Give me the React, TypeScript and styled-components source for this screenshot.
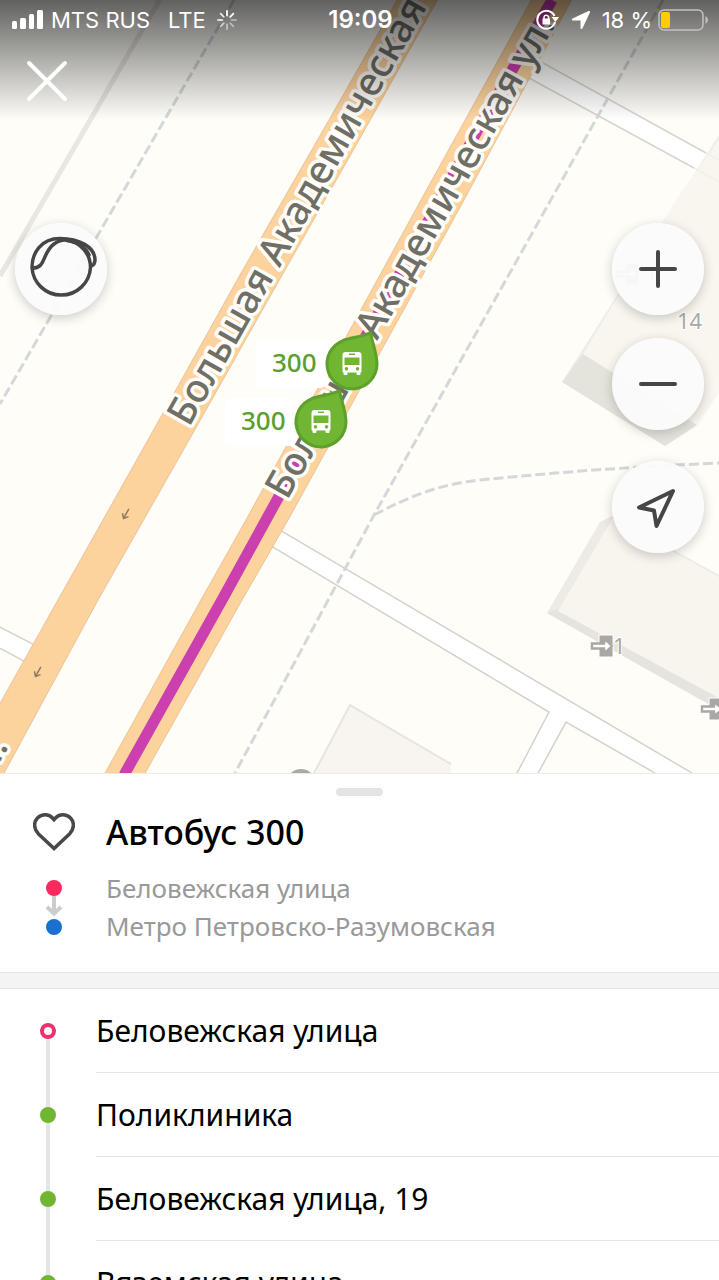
import React from 'react';
import styled, { createGlobalStyle } from 'styled-components';

const GlobalStyle = createGlobalStyle`
  *, *::before, *::after { box-sizing: border-box; }
  body {
    margin: 0;
    background: #fff;
    color: #000;
    font-family: 'Noto Sans', 'Open Sans', sans-serif;
  }
  button { font: inherit; color: inherit; }
`;

const Screen = styled.main`
  display: grid;
  grid-template-rows: 61fr 40fr;
  height: 100vh;
  overflow: hidden;
`;

/* ---------- Map ---------- */

const MapArea = styled.section`
  position: relative;
  min-height: 0;
  overflow: hidden;
  background: #fefdf8;
`;

const MapCanvas = styled.svg`
  display: block;
  width: 100%;
  height: 100%;
`;

const StreetLabel = styled.text`
  font-family: 'Noto Sans', sans-serif;
  font-size: 39px;
  font-weight: 500;
  fill: #6f6f66;
  stroke: #fffdf9;
  stroke-width: 7px;
  stroke-linejoin: round;
  paint-order: stroke;
`;

const HouseNumber = styled.text`
  font-family: 'Noto Sans', sans-serif;
  font-size: 22px;
  fill: #aaa9a5;
  stroke: #fff;
  stroke-width: 2px;
  paint-order: stroke;
`;

const PinLabel = styled.text`
  font-family: 'Noto Sans', sans-serif;
  font-size: 26px;
  font-weight: 500;
  fill: #5b9f2e;
`;

const TopShade = styled.div`
  position: absolute;
  inset: 0 0 auto;
  height: 120px;
  background: linear-gradient(rgba(0, 0, 0, 0.62), rgba(0, 0, 0, 0.31) 50%, rgba(0, 0, 0, 0));
`;

const TopBar = styled.header`
  position: absolute;
  inset: 0 0 auto;
  color: #fff;
`;

const StatusBar = styled.div`
  display: grid;
  grid-template-columns: 1fr auto 1fr;
  align-items: center;
  height: 40px;
  padding: 0 10px 0 12px;
  font-family: Inter, Roboto, sans-serif;
  font-size: 22px;
  line-height: 40px;
  white-space: nowrap;
`;

const StatusGroup = styled.div<{ $end?: boolean }>`
  display: flex;
  align-items: center;
  justify-content: ${(p) => (p.$end ? 'flex-end' : 'flex-start')};
  gap: ${(p) => (p.$end ? '12px' : '18px')};
`;

const Network = styled.span`
  display: flex;
  align-items: center;
  gap: 11px;
`;

const Carrier = styled.span`
  display: flex;
  align-items: center;
  gap: 8px;
`;

const Clock = styled.time`
  font-size: 24px;
  font-weight: 600;
`;

const Battery = styled.span`
  display: flex;
  align-items: center;
  gap: 6px;
`;

const CloseButton = styled.button`
  display: block;
  margin: 17px 0 0 23px;
  padding: 0;
  width: 48px;
  height: 48px;
  border: 0;
  background: none;
  cursor: pointer;
`;

const Controls = styled.div`
  position: absolute;
  inset: 0;
  display: flex;
  justify-content: space-between;
  align-items: center;
  padding: 3px 15px 0;
  pointer-events: none;
`;

const ControlColumn = styled.div`
  display: flex;
  flex-direction: column;
  align-self: center;
  min-height: 330px;
`;

const ZoomGroup = styled.div`
  display: flex;
  flex-direction: column;
  gap: 23px;
  margin-bottom: 31px;
`;

const RoundButton = styled.button`
  display: grid;
  place-items: center;
  width: 92px;
  height: 92px;
  padding: 0;
  border: 0;
  border-radius: 50%;
  background: rgba(252, 251, 252, 0.95);
  box-shadow: 0 3px 12px rgba(0, 0, 0, 0.2);
  pointer-events: auto;
  cursor: pointer;
`;

/* ---------- Bottom sheet ---------- */

const Sheet = styled.section`
  display: flex;
  flex-direction: column;
  min-height: 0;
  overflow-y: auto;
  scrollbar-width: none;
  border-top: 1px solid #ecebe8;
  background: #fff;
`;

const Handle = styled.div`
  flex: none;
  align-self: center;
  width: 47px;
  height: 8px;
  margin-top: 14px;
  border-radius: 4px;
  background: #e4e4e4;
`;

const RouteHeader = styled.div`
  flex: none;
  display: grid;
  grid-template-columns: 106px 1fr;
  padding: 12px 0 26px;
`;

const FavouriteButton = styled.button`
  display: grid;
  place-items: center;
  height: 48px;
  padding: 0 0 0 2px;
  border: 0;
  background: none;
  cursor: pointer;
`;

const Title = styled.h1`
  margin: 0;
  font-size: 34px;
  font-weight: 500;
  line-height: 48px;
`;

const Direction = styled.svg`
  justify-self: center;
  margin: 14px 0 0 2px;
`;

const Ends = styled.div`
  margin-top: 13px;
  color: #999;
  font-size: 26px;
  line-height: 38px;
`;

const End = styled.p`
  margin: 0;
`;

const Divider = styled.div`
  flex: none;
  height: 17px;
  border: solid #e5e5e5;
  border-width: 1px 0;
  background: #f4f4f4;
`;

const Stops = styled.ol`
  flex: none;
  margin: 0;
  padding: 0;
  list-style: none;
`;

const Stop = styled.li`
  display: grid;
  grid-template-columns: 96px 1fr;
  height: 84px;
`;

const StopName = styled.span`
  border-bottom: 1px solid #e5e5e5;
  font-size: 30px;
  line-height: 83px;
  white-space: nowrap;
`;

const Track = styled.span`
  display: flex;
  flex-direction: column;
  align-items: center;
`;

const Rail = styled.span<{ $hidden?: boolean }>`
  flex: 1;
  width: 4px;
  background: ${(p) => (p.$hidden ? 'transparent' : '#e5e5e5')};
`;

const Dot = styled.span<{ $start?: boolean }>`
  width: 16px;
  height: 16px;
  border: ${(p) => (p.$start ? '4px solid #f0306a' : '8px solid #70b632')};
  border-radius: 50%;
  background: #fff;
`;

const stops = ['Беловежская улица', 'Поликлиника', 'Беловежская улица, 19', 'Вяземская улица'];

const Entrance = ({ x, y }: { x: number; y: number }) => (
  <g transform={`translate(${x} ${y})`}>
    <path d="M8 0h14v22H8z" fill="#aaa7a4" stroke="#fff" strokeWidth="1" />
    <path d="M1 8.500h12v-4l7.500 6.500-7.500 6.500v-4H1z" fill="#fff" stroke="#aaa7a4" strokeWidth="2.500" />
    <path d="M2.500 10h12V6.500l5 4.500-5 4.500V12h-12z" fill="#fff" />
  </g>
);

const OneWay = ({ x, y }: { x: number; y: number }) => (
  <g transform={`translate(${x} ${y}) rotate(29)`} fill="none" stroke="#8d7a62" strokeWidth="1.500">
    <path d="M0 -6V5M-3.500 1L0 5L3.500 1" />
  </g>
);

const BusPin = ({ x, y }: { x: number; y: number }) => (
  <g transform={`translate(${x} ${y})`}>
    <rect x="-96" y="-24" width="72" height="48" rx="8" fill="#fff" />
    <PinLabel x="-80" y="8">300</PinLabel>
    <path
      d="M18.500 -31.500C19.500 -24 25 -11 25 0A25 25 0 1 1 -9 -23.500C0 -26.500 10 -27.500 18.500 -31.500Z"
      fill="#70b632"
      stroke="#5da02a"
      strokeWidth="3"
      strokeLinejoin="round"
    />
    <path
      fillRule="evenodd"
      fill="#fff"
      d="M-6.500 -12H6.500Q9.500 -12 9.500 -9V7.500Q9.500 8.500 8.500 8.500V10Q8.500 11 7.500 11H5.500Q4.500 11 4.500 10V8.500H-4.500V10Q-4.500 11 -5.500 11H-7.500Q-8.500 11 -8.500 10V8.500Q-9.500 8.500 -9.500 7.500V-9Q-9.500 -12 -6.500 -12ZM-3 -10.500V-9H3V-10.500ZM-7.500 -6.500V1H7.500V-6.500ZM-5.500 3A1.800 1.800 0 1 0 -5.500 6.600A1.800 1.800 0 1 0 -5.500 3ZM5.500 3A1.800 1.800 0 1 0 5.500 6.600A1.800 1.800 0 1 0 5.500 3Z"
    />
  </g>
);

const CityMap = () => (
  <MapCanvas viewBox="0 0 719 773" preserveAspectRatio="xMidYMid slice" role="img" aria-label="Карта">
    {/* Buildings */}
    <path d="M562 382L719 135V390L697 425L665 446Z" fill="#eeede5" />
    <path d="M562 382L583 354L697 425L665 446Z" fill="#e5e4dc" />
    <path d="M583 354L676 200L719 139V393L697 425Z" fill="#f8f6ee" />
    <path d="M547 613L600 522L612 516L719 575V710Z" fill="#eeebe5" />
    <path d="M547 613L558 609L719 698V710Z" fill="#e6e4de" />
    <path d="M558 611L613 518L719 577V698Z" fill="#f8f5ee" />
    <path d="M350 704L314 773H451V764Z" fill="#f8f5f0" />
    <path d="M314 773L350 705L451 764" fill="none" stroke="#e8e5df" strokeWidth="2" />
    <circle cx="301" cy="784" r="15" fill="#aaa9a9" />

    {/* Footpaths and fence */}
    <path d="M162 -4L0 276" stroke="#e9e7df" strokeWidth="5" />
    <g fill="none" stroke="#d5d7d9" strokeWidth="3" strokeDasharray="10 4">
      <path d="M234 0L0 404" />
      <path d="M374 515C410 496 440 484 480 480S600 468 719 463" />
    </g>

    {/* Side streets */}
    <path d="M539 61L706 153L694 168L529 78Z" fill="#fff" />
    <path d="M534 58L706 153M529 78L694 168" stroke="#d9d4ce" strokeWidth="1.500" />
    <path d="M706 153L719 160M694 168L719 182" stroke="#efece5" strokeWidth="1" />
    <path d="M280 530L692 773H655L566 722L538 773H517L549 712L268 545Z" fill="#fff" />
    <g fill="none" stroke="#d6d1cc" strokeWidth="1.500">
      <path d="M280 530L692 773" />
      <path d="M268 544L549 712L516 775" />
      <path d="M537 775L566 722L655 773" />
    </g>
    <path d="M0 627L33 644L24 661L0 648Z" fill="#fff" />
    <path d="M0 627L33 644M0 648L24 661" stroke="#d6d1cc" strokeWidth="1.500" />
    <path d="M663 0L374 515L235 773" fill="none" stroke="#d5d7d9" strokeWidth="3" strokeDasharray="10 4" />

    {/* Avenue carriageways */}
    <g fill="#fdd39d" stroke="#ecc59c" strokeWidth="1">
      <path d="M399 -3L329 120L240 275L148 440L58 600L-2 707V776L3 775L98 600L189 440L281 277L359 140L439 -3Z" />
      <path d="M533 -3L421 200L246 520L201 600L104 775H144L242 600L288 520L464 200L573 -3Z" />
    </g>
    <path d="M124 775L222 600L278 498L482 122L522 53L552 0" fill="none" stroke="#cb3fae" strokeWidth="11" />
    <OneWay x={126} y={514} />
    <OneWay x={38} y={672} />

    <StreetLabel transform="translate(189 428) rotate(-60.500)">Большая Академическая</StreetLabel>
    <StreetLabel transform="translate(287 501) rotate(-60.600)">Большая Академическая ул.</StreetLabel>
    <StreetLabel transform="translate(9 746) rotate(-60.500)" textAnchor="end">ул.</StreetLabel>

    <Entrance x={617} y={263} />
    <HouseNumber x="645" y="282">1</HouseNumber>
    <HouseNumber x="677" y="329">14</HouseNumber>
    <Entrance x={591} y={635} />
    <HouseNumber x="613" y="654">1</HouseNumber>
    <Entrance x={701} y={698} />

    <BusPin x={352} y={364} />
    <BusPin x={321} y={422} />
  </MapCanvas>
);

const line = { fill: 'none', stroke: '#464646', strokeWidth: 4, strokeLinecap: 'round', strokeLinejoin: 'round' } as const;

const spokes = [1, 1, 0.4, 0.45, 0.5, 0.6, 0.75, 0.85];

const App = () => (
  <>
    <GlobalStyle />
    <Screen>
      <MapArea>
        <CityMap />
        <TopShade />
        <Controls>
          <ControlColumn>
            <RoundButton type="button" aria-label="Обзор">
              <svg width="92" height="92" viewBox="0 0 92 92" {...line} strokeWidth="3.500">
                <path d="M52 17.500C66 19 75.500 31 75.500 44.500A29.300 29.300 0 0 1 17 44.500C17 30 26 15.500 45 15.500C64 15.500 80 24 80 37C80 40 78.500 42 76.500 43" />
                <path d="M18 45C31 45 27 30 39 21C43 18 49 16.500 54 17.500C63 19 71 25 74 32" />
              </svg>
            </RoundButton>
          </ControlColumn>
          <ControlColumn>
            <ZoomGroup>
              <RoundButton type="button" aria-label="Приблизить">
                <svg width="40" height="40" viewBox="0 0 40 40" {...line}>
                  <path d="M20 3V37M3 20H37" />
                </svg>
              </RoundButton>
              <RoundButton type="button" aria-label="Отдалить">
                <svg width="40" height="40" viewBox="0 0 40 40" {...line}>
                  <path d="M3 20H37" />
                </svg>
              </RoundButton>
            </ZoomGroup>
            <RoundButton type="button" aria-label="Моё местоположение">
              <svg width="44" height="44" viewBox="0 0 44 44" {...line}>
                <path d="M37 6L3 22.500L18 25.500L20.500 41Z" />
              </svg>
            </RoundButton>
          </ControlColumn>
        </Controls>
        <TopBar>
          <StatusBar>
            <StatusGroup>
              <Carrier>
                <svg width="31" height="20" viewBox="0 0 31 20" fill="#fff" aria-hidden="true">
                  <rect x="0" y="11" width="5" height="8" rx="1.500" />
                  <rect x="8" y="8" width="6" height="11" rx="1.500" />
                  <rect x="17" y="4" width="5" height="15" rx="1.500" />
                  <rect x="25" y="0" width="6" height="19" rx="1.500" />
                </svg>
                MTS RUS
              </Carrier>
              <Network>
                LTE
                <svg width="20" height="20" viewBox="-10 -10 20 20" aria-hidden="true">
                  {spokes.map((opacity, i) => (
                    <path key={i} d="M0 -4.500V-9" stroke="#fff" strokeWidth="1.800" strokeLinecap="round" opacity={opacity} transform={`rotate(${i * 45})`} />
                  ))}
                </svg>
              </Network>
            </StatusGroup>
            <Clock>19:09</Clock>
            <StatusGroup $end>
              <svg width="24" height="22" viewBox="0 0 24 22" aria-hidden="true">
                <path d="M18.500 7A9 9 0 1 0 19 13" fill="none" stroke="#fff" strokeWidth="2" />
                <path d="M15.500 8H23L19.500 13Z" fill="#fff" />
                <path d="M6.500 9.500H14V15.500H6.500Z" fill="#fff" />
                <path d="M8 10V8A2.300 2.300 0 0 1 12.500 8V10" fill="none" stroke="#fff" strokeWidth="1.500" />
              </svg>
              <svg width="18" height="18" viewBox="0 0 18 18" aria-hidden="true">
                <path d="M17 1L1 8.500H8.500Q9.500 8.500 9.500 9.500V17Z" fill="#fff" stroke="#fff" strokeWidth="2" strokeLinejoin="round" />
              </svg>
              <Battery>
                18 %
                <svg width="51" height="22" viewBox="0 0 51 22" aria-hidden="true">
                  <rect x="1" y="1" width="44" height="20" rx="5" fill="none" stroke="#c2c1bf" strokeWidth="1.500" />
                  <rect x="3" y="3" width="9" height="16" rx="2" fill="#fc0" />
                  <path d="M47.500 7Q50 8.500 50 11T47.500 15Z" fill="#c2c1bf" />
                </svg>
              </Battery>
            </StatusGroup>
          </StatusBar>
          <CloseButton type="button" aria-label="Закрыть">
            <svg width="48" height="48" viewBox="0 0 48 48" fill="none" stroke="#fff" strokeWidth="4" strokeLinecap="round" aria-hidden="true">
              <path d="M6 6L42 42M42 6L6 42" />
            </svg>
          </CloseButton>
        </TopBar>
      </MapArea>

      <Sheet>
        <Handle />
        <RouteHeader>
          <FavouriteButton type="button" aria-label="В избранное">
            <svg width="42" height="38" viewBox="0 0 42 38" fill="none" stroke="#484848" strokeWidth="3.500" aria-hidden="true">
              <path d="M21 35.500L5.500 21C0.500 16 0.500 9 4.500 5C9 0.500 16 1 19.500 5L21 6.700L22.500 5C26 1 33 0.500 37.500 5C41.500 9 41.500 16 36.500 21Z" />
            </svg>
          </FavouriteButton>
          <Title>Автобус 300</Title>
          <Direction width="18" height="76" viewBox="0 0 18 76" aria-hidden="true">
            <path d="M9 26V42M2 37L9 43.500L16 37" fill="none" stroke="#ccc" strokeWidth="4" />
            <circle cx="9" cy="18" r="8" fill="#fc2860" />
            <circle cx="9" cy="57" r="8" fill="#1a6fd0" />
          </Direction>
          <Ends>
            <End>Беловежская улица</End>
            <End>Метро Петровско-Разумовская</End>
          </Ends>
        </RouteHeader>
        <Divider />
        <Stops>
          {stops.map((name, i) => (
            <Stop key={name}>
              <Track>
                <Rail $hidden={i === 0} />
                <Dot $start={i === 0} />
                <Rail />
              </Track>
              <StopName>{name}</StopName>
            </Stop>
          ))}
        </Stops>
      </Sheet>
    </Screen>
  </>
);

export default App;
